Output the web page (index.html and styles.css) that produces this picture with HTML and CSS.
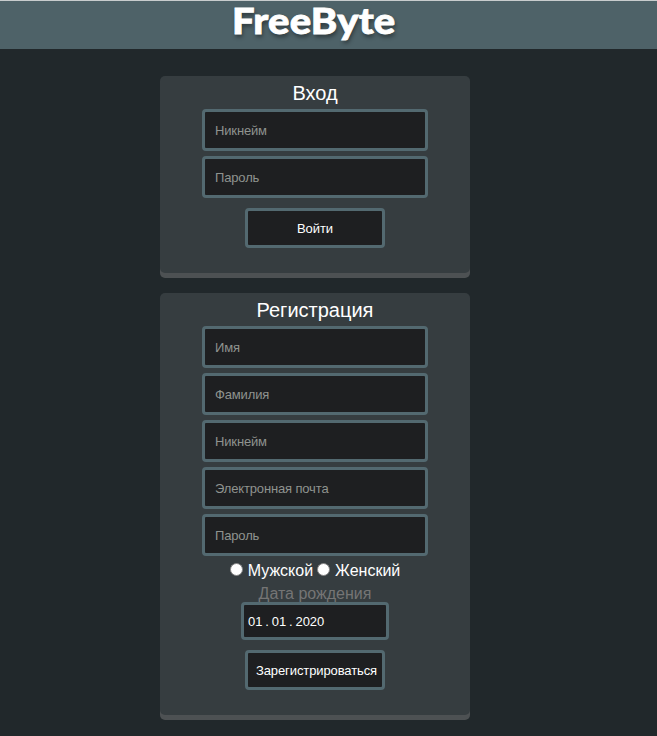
FILE: index.html
```html
<!DOCTYPE html>
<html lang="ru">
<head>
<meta charset="utf-8">
<title>FreeByte</title>
<link rel="stylesheet" href="styles.css">
</head>
<body>
<header class="header"><div class="logo">FreeByte</div></header>
<main class="forms">
  <form class="card login">
    <h2 class="title">Вход</h2>
    <input class="field" type="text" placeholder="Никнейм">
    <input class="field" type="password" placeholder="Пароль">
    <button class="button" type="button">Войти</button>
  </form>
  <form class="card register">
    <h2 class="title">Регистрация</h2>
    <input class="field" type="text" placeholder="Имя">
    <input class="field" type="text" placeholder="Фамилия">
    <input class="field" type="text" placeholder="Никнейм">
    <input class="field" type="email" placeholder="Электронная почта">
    <input class="field" type="password" placeholder="Пароль">
    <div class="genders">
      <label class="gender"><input class="radio" type="radio" name="gender">Мужской</label>
      <label class="gender"><input class="radio" type="radio" name="gender">Женский</label>
    </div>
    <div class="caption">Дата рождения</div>
    <div class="date"><span>01</span><span>.</span><span>01</span><span>.</span><span>2020</span></div>
    <button class="button" type="button">Зарегистрироваться</button>
  </form>
</main>
</body>
</html>
```
FILE: styles.css
```css
* { box-sizing: border-box; }
body {
  margin: 0;
  height: 736px;
  background: #21282b;
  color: #fff;
  font-family: "Liberation Sans", Arial, sans-serif;
}
.header {
  height: 49px;
  border-top: 1px solid #c8cccd;
  background: #4e6268;
  padding-left: 232px;
}
.logo {
  width: max-content;
  font: 900 36px/39px Lato, sans-serif;
  letter-spacing: 0.2px;
  transform: scaleX(1.11);
  transform-origin: left;
  -webkit-text-stroke: 0.8px #fff;
  text-shadow: 1px 3px 4px rgba(0, 0, 0, .45);
}
.forms {
  display: flex;
  flex-direction: column;
  gap: 20px;
  width: 310px;
  margin: 27px 0 0 160px;
}
.card {
  display: flex;
  flex-direction: column;
  align-items: center;
  border-radius: 5px;
  background: #363d40;
  box-shadow: 0 5px #4d5153;
}
.login { height: 197px; }
.register { height: 422px; }
.title {
  margin: 0;
  height: 33px;
  font-size: 20px;
  line-height: 34px;
  font-weight: 400;
}
.field {
  flex: none;
  width: 226px;
  height: 42px;
  margin: 0 0 5px;
  padding: 0 10px;
  border: 3px solid #536970;
  border-radius: 4px;
  background: #1e1f21;
  color: #fff;
  font: 13px "Liberation Sans", Arial, sans-serif;
  letter-spacing: -0.15px;
}
.field::placeholder { color: #8f938f; opacity: 1; }
.button {
  flex: none;
  width: 140px;
  height: 40px;
  margin: 5px 0 0;
  padding: 0 0 0 3px;
  border: 3px solid #536970;
  border-radius: 4px;
  background: #1e1f21;
  color: #fff;
  font: 13px "Liberation Sans", Arial, sans-serif;
  letter-spacing: -0.1px;
  white-space: nowrap;
}
.login .button { padding: 0; }
.genders {
  display: flex;
  gap: 4px;
  height: 22px;
  margin-top: -2px;
  font-size: 16px;
  line-height: 24px;
}
.gender { display: flex; }
.radio {
  appearance: none;
  width: 13px;
  height: 13px;
  margin: 4px 5px 0 0;
  border: 1px solid #858585;
  border-radius: 50%;
  background: #fff;
}
.caption {
  height: 21px;
  margin-top: 0;
  padding-top: 3px;
  color: #757575;
  font-size: 16px;
  line-height: 20px;
}
.date {
  display: flex;
  align-items: center;
  gap: 3px;
  width: 148px;
  height: 38px;
  margin-bottom: 5px;
  padding-left: 4px;
  border: 3px solid #536970;
  border-radius: 4px;
  background: #1e1f21;
  font-size: 13px;
  letter-spacing: -0.1px;
}
```
